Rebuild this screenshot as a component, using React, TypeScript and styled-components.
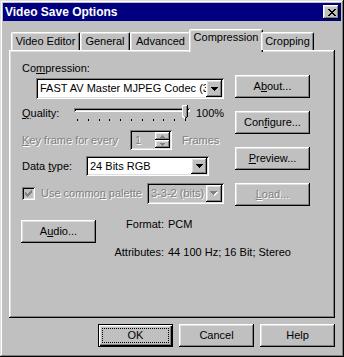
import styled, { createGlobalStyle } from 'styled-components';

const GlobalStyle = createGlobalStyle`
  html, body {
    margin: 0;
    padding: 0;
    background: #c0c0c0;
    overflow: hidden;
  }
  body {
    font-family: "Liberation Sans", Arial, sans-serif;
    font-size: 11px;
    color: #000;
  }
`;

// classic 3d bevels
const raised = `box-shadow: inset -1px -1px #000, inset 1px 1px #fff, inset -2px -2px #808080, inset 2px 2px #dfdfdf;`;
const sunken = `box-shadow: inset 1px 1px #808080, inset -1px -1px #fff, inset 2px 2px #000, inset -2px -2px #dfdfdf;`;

const CLOSE = ['xx....xx', '.xx..xx.', '..xxxx..', '...xx...', '..xxxx..', '.xx..xx.', 'xx....xx'];
const DOWN = ['xxxxxxx', '.xxxxx.', '..xxx..', '...x...'];
const SPIN_UP = ['..x..', '.xxx.', 'xxxxx'];
const SPIN_DOWN = ['xxxxx', '.xxx.', '..x..'];
const CHECK = ['......x', '.....xx', 'x...xxx', 'xx.xxx.', 'xxxxx..', '.xxx...', '..x....'];

const PixelSvg = styled.svg`
  display: block;
  flex: none;
`;

const Pixels = ({ rows, color = '#000', shadow }: { rows: string[]; color?: string; shadow?: string }) => {
  const cells: [number, number][] = [];
  rows.forEach((r, y) => [...r].forEach((c, x) => c === 'x' && cells.push([x, y])));
  const pad = shadow ? 1 : 0;
  return (
    <PixelSvg width={rows[0].length + pad} height={rows.length + pad} shapeRendering="crispEdges">
      {shadow && cells.map(([x, y]) => <rect key={`s${x}_${y}`} x={x + 1} y={y + 1} width={1} height={1} fill={shadow} />)}
      {cells.map(([x, y]) => <rect key={`${x}_${y}`} x={x} y={y} width={1} height={1} fill={color} />)}
    </PixelSvg>
  );
};

const Window = styled.div`
  width: 344px;
  height: 357px;
  box-sizing: border-box;
  padding: 3px;
  background: #c0c0c0;
  box-shadow: inset -1px -1px #000, inset 1px 1px #dfdfdf, inset -2px -2px #808080, inset 2px 2px #fff;
  display: flex;
  flex-direction: column;
`;

const TitleBar = styled.div`
  height: 18px;
  background: #000080;
  color: #fff;
  display: flex;
  align-items: center;
  padding: 0 2px;
  font-weight: bold;
  font-size: 12px;
`;

const TitleText = styled.span`
  flex: 1;
`;

const CloseButton = styled.div`
  width: 16px;
  height: 14px;
  background: #c0c0c0;
  ${raised}
  display: flex;
  align-items: center;
  justify-content: center;
  padding-left: 1px;
  box-sizing: border-box;
`;

const Body = styled.div`
  padding: 8px 6px 0;
  display: flex;
  flex-direction: column;
`;

const TabStrip = styled.div`
  display: flex;
  align-items: flex-end;
  height: 21px;
  padding-left: 2px;
  position: relative;
  z-index: 1;
`;

const Tab = styled.div<{ $w: number; $active?: boolean }>`
  box-sizing: border-box;
  width: ${(p) => p.$w}px;
  height: ${(p) => (p.$active ? 23 : 18)}px;
  margin: 0 ${(p) => (p.$active ? -2 : 0)}px ${(p) => (p.$active ? -2 : 0)}px;
  background: #c0c0c0;
  border-top: 1px solid #fff;
  border-left: 1px solid #fff;
  border-right: 1px solid #000;
  border-radius: 2px 2px 0 0;
  box-shadow: inset -1px 0 #808080, inset 1px 1px #dfdfdf;
  text-align: center;
  line-height: 13px;
  padding-top: ${(p) => (p.$active ? 1 : 2)}px;
  white-space: nowrap;
`;

const Panel = styled.div`
  height: 268px;
  box-sizing: border-box;
  ${`box-shadow: inset -1px -1px #000, inset 1px 1px #fff, inset -2px -2px #808080, inset 2px 2px #dfdfdf;`}
  padding: 12px 0 0 13px;
  display: flex;
  flex-direction: column;
`;

const Columns = styled.div`
  display: flex;
  gap: 11px;
`;

const LeftCol = styled.div`
  width: 202px;
  display: flex;
  flex-direction: column;
`;

const RightCol = styled.div`
  display: flex;
  flex-direction: column;
  gap: 13px;
  padding-top: 13px;
`;

const Label = styled.div<{ $w?: number; $disabled?: boolean }>`
  line-height: 13px;
  white-space: nowrap;
  flex: none;
  ${(p) => (p.$w ? `width: ${p.$w}px;` : '')}
  color: ${(p) => (p.$disabled ? '#808080' : '#000')};
  ${(p) => (p.$disabled ? 'text-shadow: 1px 1px 0 #fff;' : '')}
`;

const Key = styled.span`
  text-decoration: underline;
`;

const Row = styled.div<{ $top: number; $h?: number }>`
  display: flex;
  align-items: center;
  margin-top: ${(p) => p.$top}px;
  ${(p) => (p.$h ? `height: ${p.$h}px;` : '')}
`;

const Combo = styled.div<{ $w: number; $h: number; $indent?: number; $top?: number; $disabled?: boolean }>`
  box-sizing: border-box;
  width: ${(p) => p.$w}px;
  height: ${(p) => p.$h}px;
  margin-left: ${(p) => p.$indent ?? 0}px;
  margin-top: ${(p) => p.$top ?? 0}px;
  padding: 2px;
  background: ${(p) => (p.$disabled ? '#c0c0c0' : '#fff')};
  ${sunken}
  display: flex;
  align-items: center;
  flex: none;
`;

const ComboText = styled.span<{ $disabled?: boolean }>`
  flex: 1;
  overflow: hidden;
  white-space: nowrap;
  padding-left: 2px;
  line-height: 13px;
  color: ${(p) => (p.$disabled ? '#808080' : '#000')};
  ${(p) => (p.$disabled ? 'text-shadow: 1px 1px 0 #fff;' : '')}
`;

const ComboArrow = styled.div`
  width: 16px;
  align-self: stretch;
  flex: none;
  background: #c0c0c0;
  ${raised}
  display: flex;
  align-items: center;
  justify-content: center;
`;

const SliderBox = styled.div`
  position: relative;
  width: 122px;
  height: 17px;
  flex: none;
`;

const SliderTrack = styled.div`
  margin: 3px 3px 0;
  height: 4px;
  box-shadow: inset 1px 1px #808080, inset -1px -1px #fff, inset 2px 2px #000, inset -2px -2px #dfdfdf;
`;

const Ticks = styled.div`
  display: flex;
  justify-content: space-between;
  margin: 7px 0 0 6px;
  width: 109px;
`;

const Tick = styled.span`
  width: 1px;
  height: 2px;
  background: #000;
`;

const Thumb = styled.svg`
  position: absolute;
  left: 111px;
  top: 0;
  display: block;
`;

const Spinner = styled.div`
  box-sizing: border-box;
  width: 42px;
  height: 20px;
  padding: 2px;
  background: #c0c0c0;
  ${sunken}
  display: flex;
  flex: none;
`;

const SpinValue = styled.span`
  flex: 1;
  padding-left: 3px;
  line-height: 16px;
  color: #808080;
  text-shadow: 1px 1px 0 #fff;
`;

const SpinButtons = styled.div`
  width: 15px;
  display: flex;
  flex-direction: column;
`;

const SpinButton = styled.div`
  flex: 1;
  background: #c0c0c0;
  ${raised}
  display: flex;
  align-items: center;
  justify-content: center;
`;

const CheckBox = styled.div`
  box-sizing: border-box;
  width: 13px;
  height: 13px;
  margin-right: 6px;
  background: #c0c0c0;
  ${sunken}
  display: flex;
  align-items: center;
  justify-content: center;
  flex: none;
`;

const Button = styled.div<{ $disabled?: boolean; $default?: boolean; $w?: number }>`
  box-sizing: border-box;
  width: ${(p) => p.$w ?? 75}px;
  height: 23px;
  background: #c0c0c0;
  ${(p) =>
    p.$default
      ? 'box-shadow: inset 1px 1px #000, inset -1px -1px #000, inset 2px 2px #fff, inset -2px -2px #000, inset -3px -3px #808080, inset 3px 3px #dfdfdf;'
      : raised}
  display: flex;
  align-items: center;
  justify-content: center;
  line-height: 13px;
  flex: none;
  color: ${(p) => (p.$disabled ? '#808080' : '#000')};
  ${(p) => (p.$disabled ? 'text-shadow: 1px 1px 0 #fff;' : '')}
  padding: 4px;
`;

const Focus = styled.div`
  flex: 1;
  align-self: stretch;
  border: 1px dotted #000;
  display: flex;
  align-items: center;
  justify-content: center;
`;

const AudioRow = styled.div`
  display: flex;
  align-items: flex-start;
  margin-top: 12px;
`;

const AudioButton = styled(Button)`
  margin: 2px 0 0 -1px;
`;

const InfoGrid = styled.div`
  display: grid;
  grid-template-columns: 68px auto;
  column-gap: 4px;
  row-gap: 15px;
  line-height: 13px;
`;

const InfoLabel = styled.span`
  text-align: right;
`;

const ButtonBar = styled.div`
  display: flex;
  justify-content: flex-end;
  gap: 6px;
  margin-top: 6px;
`;

const tabs = [
  { name: 'Video Editor', w: 69 },
  { name: 'General', w: 50 },
  { name: 'Advanced', w: 61 },
  { name: 'Compression', w: 74, active: true },
  { name: 'Cropping', w: 53 },
];

const App = () => (
  <>
    <GlobalStyle />
    <Window>
      <TitleBar>
        <TitleText>Video Save Options</TitleText>
        <CloseButton>
          <Pixels rows={CLOSE} />
        </CloseButton>
      </TitleBar>

      <Body>
        <TabStrip>
          {tabs.map((t) => (
            <Tab key={t.name} $w={t.w} $active={t.active}>
              {t.name}
            </Tab>
          ))}
        </TabStrip>

        <Panel>
          <Columns>
            <LeftCol>
              <Label>
                Co<Key>m</Key>pression:
              </Label>
              <Combo $w={188} $h={21} $indent={14} $top={3}>
                <ComboText>FAST AV Master MJPEG Codec (3:1)</ComboText>
                <ComboArrow>
                  <Pixels rows={DOWN} />
                </ComboArrow>
              </Combo>

              <Row $top={6} $h={17}>
                <Label $w={49}>
                  <Key>Q</Key>uality:
                </Label>
                <SliderBox>
                  <SliderTrack />
                  <Ticks>
                    {Array.from({ length: 11 }, (_, i) => (
                      <Tick key={i} />
                    ))}
                  </Ticks>
                  <Thumb width="7" height="16" shapeRendering="crispEdges">
                    <path d="M0 0H6V11L3 14L0 11Z" fill="#c0c0c0" />
                    <path d="M0.5 11V0.5H5.5" stroke="#fff" fill="none" />
                    <path d="M0.5 11L3 13.5" stroke="#fff" fill="none" />
                    <path d="M5.5 0V11.5L3 14" stroke="#000" fill="none" />
                    <path d="M4.5 1V11L3 12.5" stroke="#808080" fill="none" />
                  </Thumb>
                </SliderBox>
                <Label style={{ marginLeft: 3 }}>100%</Label>
              </Row>

              <Row $top={8}>
                <Label $w={108} $disabled>
                  <Key>K</Key>ey frame for every
                </Label>
                <Spinner>
                  <SpinValue>1</SpinValue>
                  <SpinButtons>
                    <SpinButton>
                      <Pixels rows={SPIN_UP} color="#808080" />
                    </SpinButton>
                    <SpinButton>
                      <Pixels rows={SPIN_DOWN} color="#808080" />
                    </SpinButton>
                  </SpinButtons>
                </Spinner>
                <Label $disabled style={{ marginLeft: 10 }}>
                  Frames
                </Label>
              </Row>

              <Row $top={6}>
                <Label $w={64}>
                  Data <Key>t</Key>ype:
                </Label>
                <Combo $w={123} $h={20}>
                  <ComboText>24 Bits RGB</ComboText>
                  <ComboArrow>
                    <Pixels rows={DOWN} />
                  </ComboArrow>
                </Combo>
              </Row>

              <Row $top={7}>
                <CheckBox>
                  <Pixels rows={CHECK} color="#808080" />
                </CheckBox>
                <Label $w={106} $disabled>
                  Use commo<Key>n</Key> palette
                </Label>
                <Combo $w={77} $h={21} $disabled>
                  <ComboText $disabled>3-3-2 (bits)</ComboText>
                  <ComboArrow>
                    <Pixels rows={DOWN} color="#808080" shadow="#fff" />
                  </ComboArrow>
                </Combo>
              </Row>
            </LeftCol>

            <RightCol>
              <Button>
                A<Key>b</Key>out...
              </Button>
              <Button>
                Con<Key>f</Key>igure...
              </Button>
              <Button>
                <Key>P</Key>review...
              </Button>
              <Button $disabled>
                <Key>L</Key>oad...
              </Button>
            </RightCol>
          </Columns>

          <AudioRow>
            <AudioButton>
              A<Key>u</Key>dio...
            </AudioButton>
            <InfoGrid>
              <InfoLabel>Format:</InfoLabel>
              <span>PCM</span>
              <InfoLabel>Attributes:</InfoLabel>
              <span>44 100 Hz; 16 Bit; Stereo</span>
            </InfoGrid>
          </AudioRow>
        </Panel>

        <ButtonBar>
          <Button $default>
            <Focus>OK</Focus>
          </Button>
          <Button>Cancel</Button>
          <Button>Help</Button>
        </ButtonBar>
      </Body>
    </Window>
  </>
);

export default App;
